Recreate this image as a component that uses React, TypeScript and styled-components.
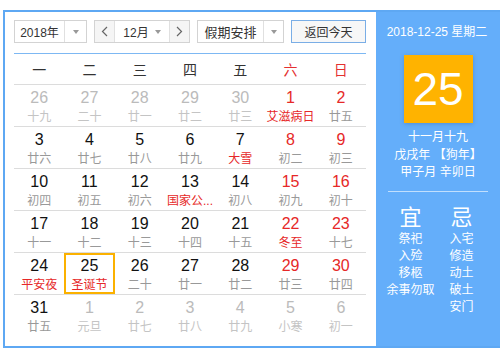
import React from 'react';
import styled, { createGlobalStyle } from 'styled-components';

const Global = createGlobalStyle`
  html, body { margin: 0; padding: 0; background: #fff; }
  body { font-family: "Liberation Sans", "Noto Sans CJK SC", sans-serif; }
`;

const Frame = styled.div`
  margin: 10px 0 0 3px;
  width: 497px;
  height: 338px;
  box-sizing: border-box;
  border: 2px solid #5ea8f3;
  border-right: none;
  display: flex;
`;

const LeftPanel = styled.div`
  width: 371px;
  box-sizing: border-box;
  padding: 8px 10px 0 9px;
  background: #fff;
`;

const Toolbar = styled.div`
  display: flex;
  justify-content: space-between;
  height: 23px;
  padding-bottom: 10px;
  border-bottom: 1px solid #7db8f3;
`;

const SelectBox = styled.div<{ $w: number; $split: number }>`
  width: ${(p) => p.$w}px;
  height: 23px;
  box-sizing: border-box;
  border: 1px solid #d3d3d3;
  display: grid;
  grid-template-columns: ${(p) => p.$split}px 1fr;
  background: #fff;
`;

const SelectText = styled.div<{ $size?: number }>`
  display: flex;
  align-items: center;
  justify-content: center;
  font-size: ${(p) => p.$size ?? 12}px;
  color: #333;
  border-right: 1px solid #e0e0e0;
`;

const Arrow = styled.div`
  display: flex;
  align-items: center;
  justify-content: center;
  &::after {
    content: '';
    border-left: 3.5px solid transparent;
    border-right: 3.5px solid transparent;
    border-top: 4px solid #999;
  }
`;

const MonthBox = styled.div`
  width: 96px;
  height: 23px;
  box-sizing: border-box;
  border: 1px solid #d3d3d3;
  display: grid;
  grid-template-columns: 20px 1fr 20px;
`;

const StepBtn = styled.div<{ $side: 'l' | 'r' }>`
  background: #f5f5f5;
  display: flex;
  align-items: center;
  justify-content: center;
  ${(p) => (p.$side === 'l' ? 'border-right: 1px solid #e0e0e0;' : 'border-left: 1px solid #e0e0e0;')}
  color: #666;
`;

const MonthLabel = styled.div`
  display: flex;
  align-items: center;
  justify-content: center;
  gap: 6px;
  font-size: 12px;
  color: #333;
  &::after {
    content: '';
    border-left: 3.5px solid transparent;
    border-right: 3.5px solid transparent;
    border-top: 4px solid #999;
  }
`;

const TodayBtn = styled.div`
  width: 75px;
  height: 23px;
  box-sizing: border-box;
  border: 1px solid #7aaee6;
  background: #f7f7f7;
  display: flex;
  align-items: center;
  justify-content: center;
  font-size: 12px;
  color: #333;
`;

const Grid = styled.div`
  display: grid;
  grid-template-columns: repeat(7, 1fr);
`;

const WeekHead = styled.div<{ $red?: boolean }>`
  height: 30px;
  display: flex;
  align-items: center;
  justify-content: center;
  font-size: 14px;
  color: ${(p) => (p.$red ? '#e43030' : '#333')};
`;

const Row = styled.div`
  display: grid;
  grid-template-columns: repeat(7, 1fr);
  height: 42px;
  box-sizing: border-box;
  border-top: 1px solid #dcdcdc;
`;

const Cell = styled.div<{ $today?: boolean }>`
  box-sizing: border-box;
  height: 41px;
  border: 2px solid ${(p) => (p.$today ? '#fbb100' : 'transparent')};
  display: flex;
  flex-direction: column;
  align-items: center;
  min-width: 0;
`;

const Num = styled.div<{ $tone: 'n' | 'r' | 'o' }>`
  padding-top: 1px;
  font-size: 16px;
  line-height: 20px;
  color: ${(p) => (p.$tone === 'r' ? '#e62828' : p.$tone === 'o' ? '#bbb' : '#111')};
`;

const Lunar = styled.div<{ $tone: 'n' | 'r' | 'o' }>`
  margin-top: 1px;
  text-align: center;
  font-size: 12px;
  line-height: 16px;
  white-space: nowrap;
  color: ${(p) => (p.$tone === 'r' ? '#e62828' : p.$tone === 'o' ? '#c4c4c4' : '#999')};
`;

const RightPanel = styled.div`
  flex: 1;
  background: #64aefa;
  color: #fff;
  display: flex;
  flex-direction: column;
  align-items: center;
  padding-top: 12px;
  box-sizing: border-box;
`;

const DateLine = styled.div`
  font-size: 12px;
  line-height: 16px;
  margin-right: 2px;
`;

const BigDay = styled.div`
  margin-top: 15px;
  width: 69px;
  height: 68px;
  background: #ffb300;
  box-shadow: 0 1px 4px rgba(40, 90, 160, 0.35);
  display: flex;
  align-items: center;
  justify-content: center;
  font-size: 46px;
  color: #fff;
`;

const LunarInfo = styled.div`
  margin-top: 6px;
  font-size: 12px;
  line-height: 17.5px;
  text-align: center;
`;

const Divider = styled.div`
  margin-top: 9px;
  width: 100px;
  height: 1px;
  background: rgba(255, 255, 255, 0.6);
`;

const Fortune = styled.div`
  margin-top: 13px;
  margin-right: 4px;
  display: grid;
  grid-template-columns: 50px 50px;
  column-gap: 1px;
`;

const FortuneCol = styled.div`
  display: flex;
  flex-direction: column;
  align-items: center;
`;

const FortuneHead = styled.div`
  font-size: 22px;
  line-height: 26px;
`;

const FortuneItem = styled.div`
  font-size: 12px;
  line-height: 17px;
  white-space: nowrap;
`;

type Tone = 'n' | 'r' | 'o';
type Day = { n: number; l: string; nt: Tone; lt: Tone; today?: boolean };

const d = (n: number, l: string, nt: Tone = 'n', lt: Tone = 'n', today = false): Day => ({ n, l, nt, lt, today });

const weeks: Day[][] = [
  [d(26, '十九', 'o', 'o'), d(27, '二十', 'o', 'o'), d(28, '廿一', 'o', 'o'), d(29, '廿二', 'o', 'o'), d(30, '廿三', 'o', 'o'), d(1, '艾滋病日', 'r', 'r'), d(2, '廿五', 'r')],
  [d(3, '廿六'), d(4, '廿七'), d(5, '廿八'), d(6, '廿九'), d(7, '大雪', 'n', 'r'), d(8, '初二', 'r'), d(9, '初三', 'r')],
  [d(10, '初四'), d(11, '初五'), d(12, '初六'), d(13, '国家公...', 'n', 'r'), d(14, '初八'), d(15, '初九', 'r'), d(16, '初十', 'r')],
  [d(17, '十一'), d(18, '十二'), d(19, '十三'), d(20, '十四'), d(21, '十五'), d(22, '冬至', 'r', 'r'), d(23, '十七', 'r')],
  [d(24, '平安夜', 'n', 'r'), d(25, '圣诞节', 'n', 'r', true), d(26, '二十'), d(27, '廿一'), d(28, '廿二'), d(29, '廿三', 'r'), d(30, '廿四', 'r')],
  [d(31, '廿五'), d(1, '元旦', 'o', 'o'), d(2, '廿七', 'o', 'o'), d(3, '廿八', 'o', 'o'), d(4, '廿九', 'o', 'o'), d(5, '小寒', 'o', 'o'), d(6, '初一', 'o', 'o')],
];

const heads = ['一', '二', '三', '四', '五', '六', '日'];

const Chevron = ({ dir }: { dir: 'l' | 'r' }) => (
  <svg width="7" height="11" viewBox="0 0 7 11">
    <path d={dir === 'l' ? 'M6 1 L1.5 5.5 L6 10' : 'M1 1 L5.5 5.5 L1 10'} fill="none" stroke="#666" strokeWidth="1.2" />
  </svg>
);

export default function App() {
  return (
    <>
      <Global />
      <Frame>
        <LeftPanel>
          <Toolbar>
            <SelectBox $w={73} $split={50}>
              <SelectText>2018年</SelectText>
              <Arrow />
            </SelectBox>
            <MonthBox>
              <StepBtn $side="l"><Chevron dir="l" /></StepBtn>
              <MonthLabel>12月</MonthLabel>
              <StepBtn $side="r"><Chevron dir="r" /></StepBtn>
            </MonthBox>
            <SelectBox $w={87} $split={66}>
              <SelectText $size={13}>假期安排</SelectText>
              <Arrow />
            </SelectBox>
            <TodayBtn>返回今天</TodayBtn>
          </Toolbar>
          <Grid>
            {heads.map((h, i) => (
              <WeekHead key={h} $red={i >= 5}>{h}</WeekHead>
            ))}
          </Grid>
          {weeks.map((w, wi) => (
            <Row key={wi}>
              {w.map((day, di) => (
                <Cell key={di} $today={day.today}>
                  <Num $tone={day.nt}>{day.n}</Num>
                  <Lunar $tone={day.lt}>{day.l}</Lunar>
                </Cell>
              ))}
            </Row>
          ))}
        </LeftPanel>
        <RightPanel>
          <DateLine>2018-12-25 星期二</DateLine>
          <BigDay>25</BigDay>
          <LunarInfo>
            <div>十一月十九</div>
            <div>戊戌年 【狗年】</div>
            <div>甲子月 辛卯日</div>
          </LunarInfo>
          <Divider />
          <Fortune>
            <FortuneCol>
              <FortuneHead>宜</FortuneHead>
              {['祭祀', '入殓', '移柩', '余事勿取'].map((t) => (
                <FortuneItem key={t}>{t}</FortuneItem>
              ))}
            </FortuneCol>
            <FortuneCol>
              <FortuneHead>忌</FortuneHead>
              {['入宅', '修造', '动土', '破土', '安门'].map((t) => (
                <FortuneItem key={t}>{t}</FortuneItem>
              ))}
            </FortuneCol>
          </Fortune>
        </RightPanel>
      </Frame>
    </>
  );
}
